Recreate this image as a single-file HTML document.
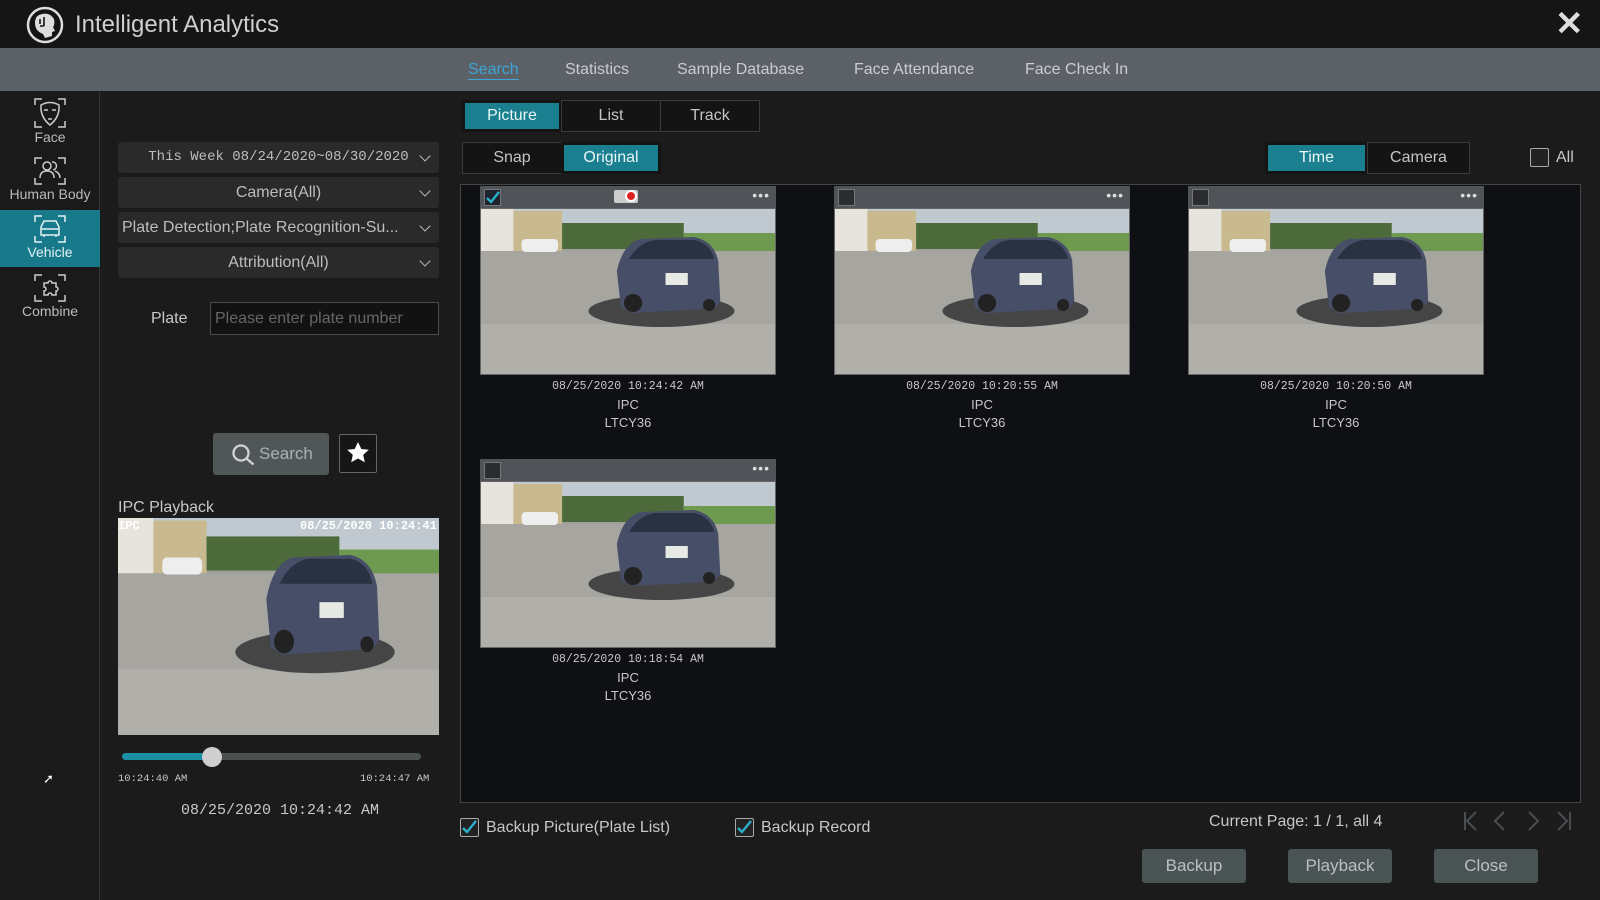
<!DOCTYPE html>
<html><head><meta charset="utf-8"><style>
*{box-sizing:border-box;margin:0;padding:0}
body{width:1600px;height:900px;background:#1b1b1c;font-family:"Liberation Sans",sans-serif;color:#c8c8c8;position:relative;overflow:hidden;font-size:16px}
.a{position:absolute}
.title{left:0;top:0;width:1600px;height:48px;background:#151515}
.tabs{left:0;top:48px;width:1600px;height:43px;background:#5b6167}
.tabs span{position:absolute;top:13px;font-size:16px;color:#c9ccd0}
.side{left:0;top:91px;width:100px;height:809px;background:#1a1a1a;border-right:1px solid #333}
.si{position:absolute;left:0;width:100px;height:57px;text-align:center;font-size:14px;color:#bbb}
.si svg{display:block;margin:4px auto 0}
.dd{position:absolute;left:118px;width:321px;height:31px;background:#2a2a2b;border-radius:3px;text-align:center;line-height:31px;font-size:16px;color:#bdbdbd}
.dd:after{content:"";position:absolute;right:10px;top:10px;width:7px;height:7px;border-right:1.6px solid #bbb;border-bottom:1.6px solid #bbb;transform:rotate(45deg)}
.seg{position:absolute;height:32px;border:1px solid #3a3a3a;background:#141414;text-align:center;line-height:30px;font-size:16px;color:#c5c5c5}
.seg.on{background:#1a7f8e;color:#eaf6f8;border:3px solid #141414;line-height:26px}
.res{left:460px;top:184px;width:1121px;height:619px;background:#0f1014;border:1px solid #444}
.card{position:absolute;width:296px}
.ch{height:22px;background:#505358;position:relative}
.cb{position:absolute;left:4px;top:3px;width:17px;height:17px;border:1px solid #777;background:#2a2c30}
.cb svg{display:block;width:15px;height:15px}
.dots{position:absolute;right:6px;top:1px;color:#ddd;font-size:14px;letter-spacing:1px}
.card svg.p{display:block;width:296px;height:167px;border:1px solid #666}
.cap{text-align:center;font-size:13px;color:#c8c8c8;line-height:18px;margin-top:3px}
.mono{font-family:"Liberation Mono",monospace;font-size:11.5px}
.btn{position:absolute;top:849px;width:104px;height:34px;background:#4b5455;border-radius:3px;text-align:center;line-height:34px;color:#b9c0c0;font-size:17px}
.chk{position:absolute;width:19px;height:19px;border:1.5px solid #aaa;border-radius:2px;background:#222}
</style></head><body>
<svg width="0" height="0" style="position:absolute"><defs>
<symbol id="ph" viewBox="0 0 290 165" preserveAspectRatio="none">
<rect width="290" height="165" fill="#a09f9b"/>
<rect width="290" height="40" fill="#bfc9cf"/>
<rect x="0" y="0" width="32" height="50" fill="#e6e4dc"/>
<rect x="32" y="2" width="48" height="40" fill="#c9b98e"/>
<rect x="80" y="14" width="120" height="26" fill="#4d6b3a"/>
<rect x="200" y="24" width="90" height="22" fill="#6e9a50"/>
<rect x="0" y="42" width="290" height="123" fill="#a6a5a0"/>
<rect x="0" y="115" width="290" height="50" fill="#b0afaa"/>
<ellipse cx="178" cy="102" rx="72" ry="16" fill="#454546"/>
<rect x="40" y="30" width="36" height="13" rx="4" fill="#eee"/>
<path d="M138 98 L134 62 Q140 34 158 30 L210 28 Q230 32 234 52 L236 92 Q232 100 224 100 L148 104 Z" fill="#464f67"/>
<path d="M146 50 Q156 33 172 31 L210 31 Q226 34 230 50 Z" fill="#2a3142"/>
<rect x="182" y="64" width="22" height="12" fill="#e6e9e4"/>
<circle cx="150" cy="94" r="9" fill="#222"/><circle cx="225" cy="96" r="6" fill="#222"/>
</symbol></defs></svg>

<div class="a title">
<svg class="a" style="left:25px;top:5px" width="40" height="40" viewBox="0 0 40 40"><circle cx="20" cy="20" r="17" fill="none" stroke="#ddd" stroke-width="2.5"/><path d="M14 10 Q24 6 29 14 Q30 20 28 22 L30 26 L27 27 L27 31 L20 33 L18 29 Q10 26 10 18 Q10 12 14 10Z" fill="#ddd"/><path d="M15 14v5m4-7v9m-4 0h4" stroke="#151515" stroke-width="1.6" fill="none"/></svg>
<div class="a" style="left:75px;top:11px;font-size:24px;color:#cfcfcf">Intelligent Analytics</div>
<div class="a" style="left:1555px;top:4px;font-size:34px;color:#ddd;font-weight:bold">✕</div>
</div>
<div class="a tabs">
<span style="left:468px;color:#3ea6d9;text-decoration:underline;text-underline-offset:5px">Search</span>
<span style="left:565px">Statistics</span>
<span style="left:677px">Sample Database</span>
<span style="left:854px">Face Attendance</span>
<span style="left:1025px">Face Check In</span>
</div>
<div class="a side">
<div class="si" style="top:2px"><svg width="34" height="32" viewBox="0 0 34 32" fill="none" stroke="#ccc" stroke-width="1.5"><path d="M2 8V2h7M25 2h7v6M2 24v6h7M25 30h7v-6"/><path d="M8 8Q17 3 26 8Q27 20 17 28Q7 20 8 8Z"/><path d="M11 13h4M19 13h4M15 22h4"/></svg>Face</div>
<div class="si" style="top:61px"><svg width="34" height="30" viewBox="0 0 34 30" fill="none" stroke="#ccc" stroke-width="1.5"><path d="M2 8V2h7M25 2h7v6M2 22v6h7M25 28h7v-6"/><circle cx="14" cy="10" r="4"/><path d="M7 22q0-7 7-7t7 7M19 6a4 4 0 0 1 1 8M22 15q5 2 5 7"/></svg>Human Body</div>
<div class="si" style="top:119px;background:#17798a;color:#e3f2f5"><svg width="34" height="30" viewBox="0 0 34 30" fill="none" stroke="#e3f2f5" stroke-width="1.5"><path d="M2 8V2h7M25 2h7v6M2 22v6h7M25 28h7v-6"/><path d="M8 13l3-6h12l3 6v8H8zM8 15h18M11 21v2M23 21v2"/></svg>Vehicle</div>
<div class="si" style="top:178px"><svg width="34" height="30" viewBox="0 0 34 30" fill="none" stroke="#ccc" stroke-width="1.5"><path d="M2 8V2h7M25 2h7v6M2 22v6h7M25 28h7v-6"/><path d="M11 10h4a2 2 0 1 1 4 0h4v4a2 2 0 1 1 0 4v4h-4a2 2 0 1 0-4 0h-4v-4a2 2 0 1 0 0-4z"/></svg>Combine</div>
</div>
<div class="a" style="left:43px;top:771px;color:#fff;font-size:13px">➚</div>

<div class="dd" style="top:142px;font-family:'Liberation Mono',monospace;font-size:14px">This Week 08/24/2020~08/30/2020</div>
<div class="dd" style="top:177px">Camera(All)</div>
<div class="dd" style="top:212px;text-align:left;padding-left:4px">Plate Detection;Plate Recognition-Su...</div>
<div class="dd" style="top:247px">Attribution(All)</div>
<div class="a" style="left:151px;top:310px;font-size:16px;color:#c8c8c8">Plate</div>
<div class="a" style="left:210px;top:302px;width:229px;height:33px;border:1px solid #4a4a4a;background:#121212;color:#666;font-size:16px;line-height:31px;padding-left:4px">Please enter plate number</div>
<div class="a" style="left:213px;top:433px;width:116px;height:42px;background:#515757;border-radius:3px;color:#aab2b2;font-size:17px;line-height:42px;padding-left:46px">Search</div>
<svg class="a" style="left:231px;top:443px" width="26" height="24" viewBox="0 0 26 24" fill="none" stroke="#cfd3d3" stroke-width="2.3"><circle cx="10" cy="10" r="7.5"/><path d="M15.5 15.5l7 6"/></svg>
<div class="a" style="left:339px;top:434px;width:38px;height:39px;border:1px solid #666;border-radius:2px;background:#161616"></div>
<svg class="a" style="left:346px;top:441px" width="24" height="24" viewBox="0 0 24 24"><path d="M12 1l3.3 7 7.5.8-5.6 5.1 1.6 7.4L12 17.5 5.2 21.3l1.6-7.4L1.2 8.8 8.7 8z" fill="#fff"/></svg>
<div class="a" style="left:118px;top:499px;font-size:16px;color:#c8c8c8">IPC Playback</div>
<svg class="a" style="left:118px;top:518px" width="321" height="217"><use href="#ph"/></svg>
<div class="a" style="left:118px;top:519px;font-family:'Liberation Mono',monospace;font-size:12px;color:#fff;font-weight:bold">IPC</div>
<div class="a" style="left:300px;top:519px;font-family:'Liberation Mono',monospace;font-size:12px;color:#fff;font-weight:bold">08/25/2020 10:24:41</div>
<div class="a" style="left:122px;top:753px;width:299px;height:7px;border-radius:4px;background:#4a4f50"></div>
<div class="a" style="left:122px;top:753px;width:92px;height:7px;border-radius:4px;background:#1a8fa3"></div>
<div class="a" style="left:202px;top:747px;width:20px;height:20px;border-radius:50%;background:#cfcfcf"></div>
<div class="a" style="left:118px;top:773px;font-size:10.5px;color:#c8c8c8;font-family:'Liberation Mono',monospace">10:24:40 AM</div>
<div class="a" style="left:360px;top:773px;font-size:10.5px;color:#c8c8c8;font-family:'Liberation Mono',monospace">10:24:47 AM</div>
<div class="a" style="left:181px;top:802px;font-size:15px;color:#c8c8c8;font-family:'Liberation Mono',monospace">08/25/2020 10:24:42 AM</div>

<div class="seg on" style="left:462px;top:100px;width:100px">Picture</div>
<div class="seg" style="left:561px;top:100px;width:100px">List</div>
<div class="seg" style="left:660px;top:100px;width:100px">Track</div>
<div class="seg" style="left:462px;top:142px;width:100px">Snap</div>
<div class="seg on" style="left:561px;top:142px;width:100px">Original</div>
<div class="seg on" style="left:1265px;top:142px;width:103px">Time</div>
<div class="seg" style="left:1367px;top:142px;width:103px">Camera</div>
<div class="chk" style="left:1530px;top:148px"></div>
<div class="a" style="left:1556px;top:149px;font-size:16px">All</div>

<div class="a res"></div>
<div class="card" style="left:480px;top:186px"><div class="ch"><div class="cb" style="background:#1d2430"><svg viewBox="0 0 15 15"><path d="M2 8l4 4 8-10" stroke="#2ab0c8" stroke-width="2.4" fill="none"/></svg></div><div class="a" style="left:134px;top:4px;width:24px;height:13px;background:#ccc;border-radius:2px"></div><div class="a" style="left:145px;top:4px;width:12px;height:12px;border-radius:50%;background:#d22;border:2px solid #fff"></div><div class="dots">•••</div></div><svg class="p"><use href="#ph"/></svg><div class="cap mono">08/25/2020 10:24:42 AM</div><div class="cap" style="margin:0">IPC</div><div class="cap" style="margin:0">LTCY36</div></div>
<div class="card" style="left:834px;top:186px"><div class="ch"><div class="cb"></div><div class="dots">•••</div></div><svg class="p"><use href="#ph"/></svg><div class="cap mono">08/25/2020 10:20:55 AM</div><div class="cap" style="margin:0">IPC</div><div class="cap" style="margin:0">LTCY36</div></div>
<div class="card" style="left:1188px;top:186px"><div class="ch"><div class="cb"></div><div class="dots">•••</div></div><svg class="p"><use href="#ph"/></svg><div class="cap mono">08/25/2020 10:20:50 AM</div><div class="cap" style="margin:0">IPC</div><div class="cap" style="margin:0">LTCY36</div></div>
<div class="card" style="left:480px;top:459px"><div class="ch"><div class="cb"></div><div class="dots">•••</div></div><svg class="p"><use href="#ph"/></svg><div class="cap mono">08/25/2020 10:18:54 AM</div><div class="cap" style="margin:0">IPC</div><div class="cap" style="margin:0">LTCY36</div></div>

<div class="chk" style="left:460px;top:818px"><svg width="17" height="17" viewBox="0 0 17 17"><path d="M2 9l4 4 9-11" stroke="#2ab0c8" stroke-width="2.4" fill="none"/></svg></div>
<div class="a" style="left:486px;top:819px;font-size:16px">Backup Picture(Plate List)</div>
<div class="chk" style="left:735px;top:818px"><svg width="17" height="17" viewBox="0 0 17 17"><path d="M2 9l4 4 9-11" stroke="#2ab0c8" stroke-width="2.4" fill="none"/></svg></div>
<div class="a" style="left:761px;top:819px;font-size:16px">Backup Record</div>
<div class="a" style="left:1209px;top:813px;font-size:16px">Current Page: 1 / 1, all 4</div>
<svg class="a" style="left:1462px;top:810px" width="120" height="24" viewBox="0 0 120 24" fill="none" stroke="#4a4d52" stroke-width="2"><path d="M3 2v18M14 2L5 11l9 9M42 2l-9 9 9 9M67 2l9 9-9 9M96 2l9 9-9 9M108 2v18"/></svg>
<div class="btn" style="left:1142px">Backup</div>
<div class="btn" style="left:1288px">Playback</div>
<div class="btn" style="left:1434px">Close</div>
</body></html>
